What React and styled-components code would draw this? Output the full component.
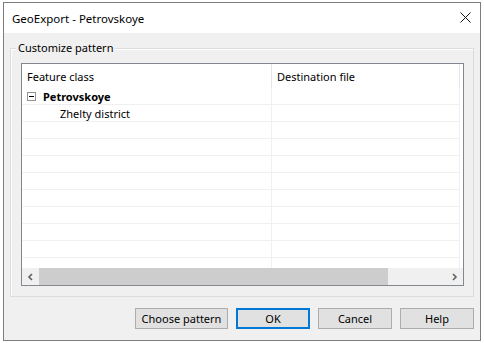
import React from "react";
import styled, { createGlobalStyle } from "styled-components";

const GlobalStyle = createGlobalStyle`
  body {
    margin: 0;
    background: #ffffff;
    font-family: "Noto Sans", "Open Sans", sans-serif;
    font-size: 11px;
    color: #000;
  }
`;

const Window = styled.div`
  margin: 2px 0 0 3px;
  width: 478px;
  height: 339px;
  box-sizing: border-box;
  border: 1px solid #7d7d7d;
  background: #f0f0f0;
  display: flex;
  flex-direction: column;
`;

const TitleBar = styled.div`
  height: 30px;
  flex: none;
  background: #ffffff;
  display: flex;
  align-items: center;
  justify-content: space-between;
  padding: 0 9px 0 8px;
  font-size: 11.5px;
`;

const CloseButton = styled.span`
  display: flex;
  width: 11px;
  height: 11px;
  margin-top: -2px;
`;

const Body = styled.div`
  flex: 1;
  display: flex;
  flex-direction: column;
  padding: 15px 6px 0 6px;
`;

const GroupBox = styled.div`
  border: 1px solid #dcdcdc;
  box-shadow: inset 1px 1px 0 #ffffff;
  padding: 0 9px 10px 10px;
  display: flex;
  flex-direction: column;
`;

const Legend = styled.span`
  align-self: flex-start;
  margin: -9px 0 0 -5px;
  padding: 0 2px;
  line-height: 16px;
  background: #f0f0f0;
`;

const ListView = styled.div`
  margin-top: 7px;
  border: 1px solid #828790;
  background: #ffffff;
  display: flex;
  flex-direction: column;
`;

const HeaderRow = styled.div`
  display: flex;
  height: 24px;
  align-items: stretch;
`;

const HeaderCell = styled.div`
  width: ${(p) => p.width}px;
  box-sizing: border-box;
  padding-left: 5px;
  display: flex;
  align-items: center;
  border-right: 1px solid #e5e5e5;
`;

const Rows = styled.div`
  height: 180px;
  overflow: hidden;
`;

const Row = styled.div`
  display: flex;
  height: 17px;
  box-sizing: border-box;
  width: 438px;
  border-bottom: 1px solid #f0f0f0;
`;

const Cell = styled.div`
  width: ${(p) => p.width}px;
  box-sizing: border-box;
  padding-left: ${(p) => p.indent || 5}px;
  display: flex;
  align-items: center;
  gap: 7px;
  border-right: 1px solid #f0f0f0;
  font-weight: ${(p) => (p.bold ? 700 : 400)};
  white-space: nowrap;
`;

const Expander = styled.span`
  width: 9px;
  height: 9px;
  box-sizing: border-box;
  border: 1px solid #919191;
  display: flex;
  align-items: center;
  justify-content: center;
  &::before {
    content: "";
    width: 5px;
    height: 1px;
    background: #000;
  }
`;

const ScrollBar = styled.div`
  display: flex;
  height: 17px;
  background: #f0f0f0;
`;

const ScrollArrow = styled.span`
  width: 17px;
  flex: none;
  display: flex;
  align-items: center;
  justify-content: center;
`;

const Track = styled.div`
  flex: 1;
  display: flex;
  align-items: stretch;
`;

const Thumb = styled.div`
  width: ${(p) => p.width}px;
  background: #cdcdcd;
`;

const ButtonRow = styled.div`
  display: flex;
  justify-content: flex-end;
  gap: 8px;
  margin-top: 11px;
`;

const Button = styled.button`
  width: ${(p) => p.width || 74}px;
  height: 21px;
  box-sizing: border-box;
  background: #e1e1e1;
  border: 1px solid ${(p) => (p.primary ? "#0078d7" : "#adadad")};
  box-shadow: ${(p) => (p.primary ? "inset 0 0 0 1px #0078d7" : "none")};
  font-family: inherit;
  font-size: 11px;
  color: #000;
  padding: 0;
`;

const Chevron = ({ dir }) => (
  <svg width="7" height="8" viewBox="0 0 7 8">
    <path
      d={dir === "left" ? "M5 1 L2 4 L5 7" : "M2 1 L5 4 L2 7"}
      fill="none"
      stroke="#606060"
      strokeWidth="1.6"
    />
  </svg>
);

const rows = [
  { name: "Petrovskoye", root: true },
  { name: "Zhelty district" },
  ...Array.from({ length: 9 }, () => ({})),
];

export default function App() {
  return (
    <>
      <GlobalStyle />
      <Window>
        <TitleBar>
          <span>GeoExport - Petrovskoye</span>
          <CloseButton>
            <svg width="11" height="11" viewBox="0 0 11 11">
              <path d="M0.5 0.5 L10.5 10.5 M10.5 0.5 L0.5 10.5" stroke="#111" strokeWidth="1" />
            </svg>
          </CloseButton>
        </TitleBar>
        <Body>
          <GroupBox>
            <Legend>Customize pattern</Legend>
            <ListView>
              <HeaderRow>
                <HeaderCell width={250}>Feature class</HeaderCell>
                <HeaderCell width={188}>Destination file</HeaderCell>
              </HeaderRow>
              <Rows>
                {rows.map((r, i) => (
                  <Row key={i}>
                    <Cell width={250} bold={r.root} indent={r.root ? 5 : 38}>
                      {r.root && <Expander />}
                      {r.name}
                    </Cell>
                    <Cell width={188} />
                  </Row>
                ))}
              </Rows>
              <ScrollBar>
                <ScrollArrow>
                  <Chevron dir="left" />
                </ScrollArrow>
                <Track>
                  <Thumb width={349} />
                </Track>
                <ScrollArrow>
                  <Chevron dir="right" />
                </ScrollArrow>
              </ScrollBar>
            </ListView>
          </GroupBox>
          <ButtonRow>
            <Button width={93}>Choose pattern</Button>
            <Button primary>OK</Button>
            <Button>Cancel</Button>
            <Button>Help</Button>
          </ButtonRow>
        </Body>
      </Window>
    </>
  );
}
